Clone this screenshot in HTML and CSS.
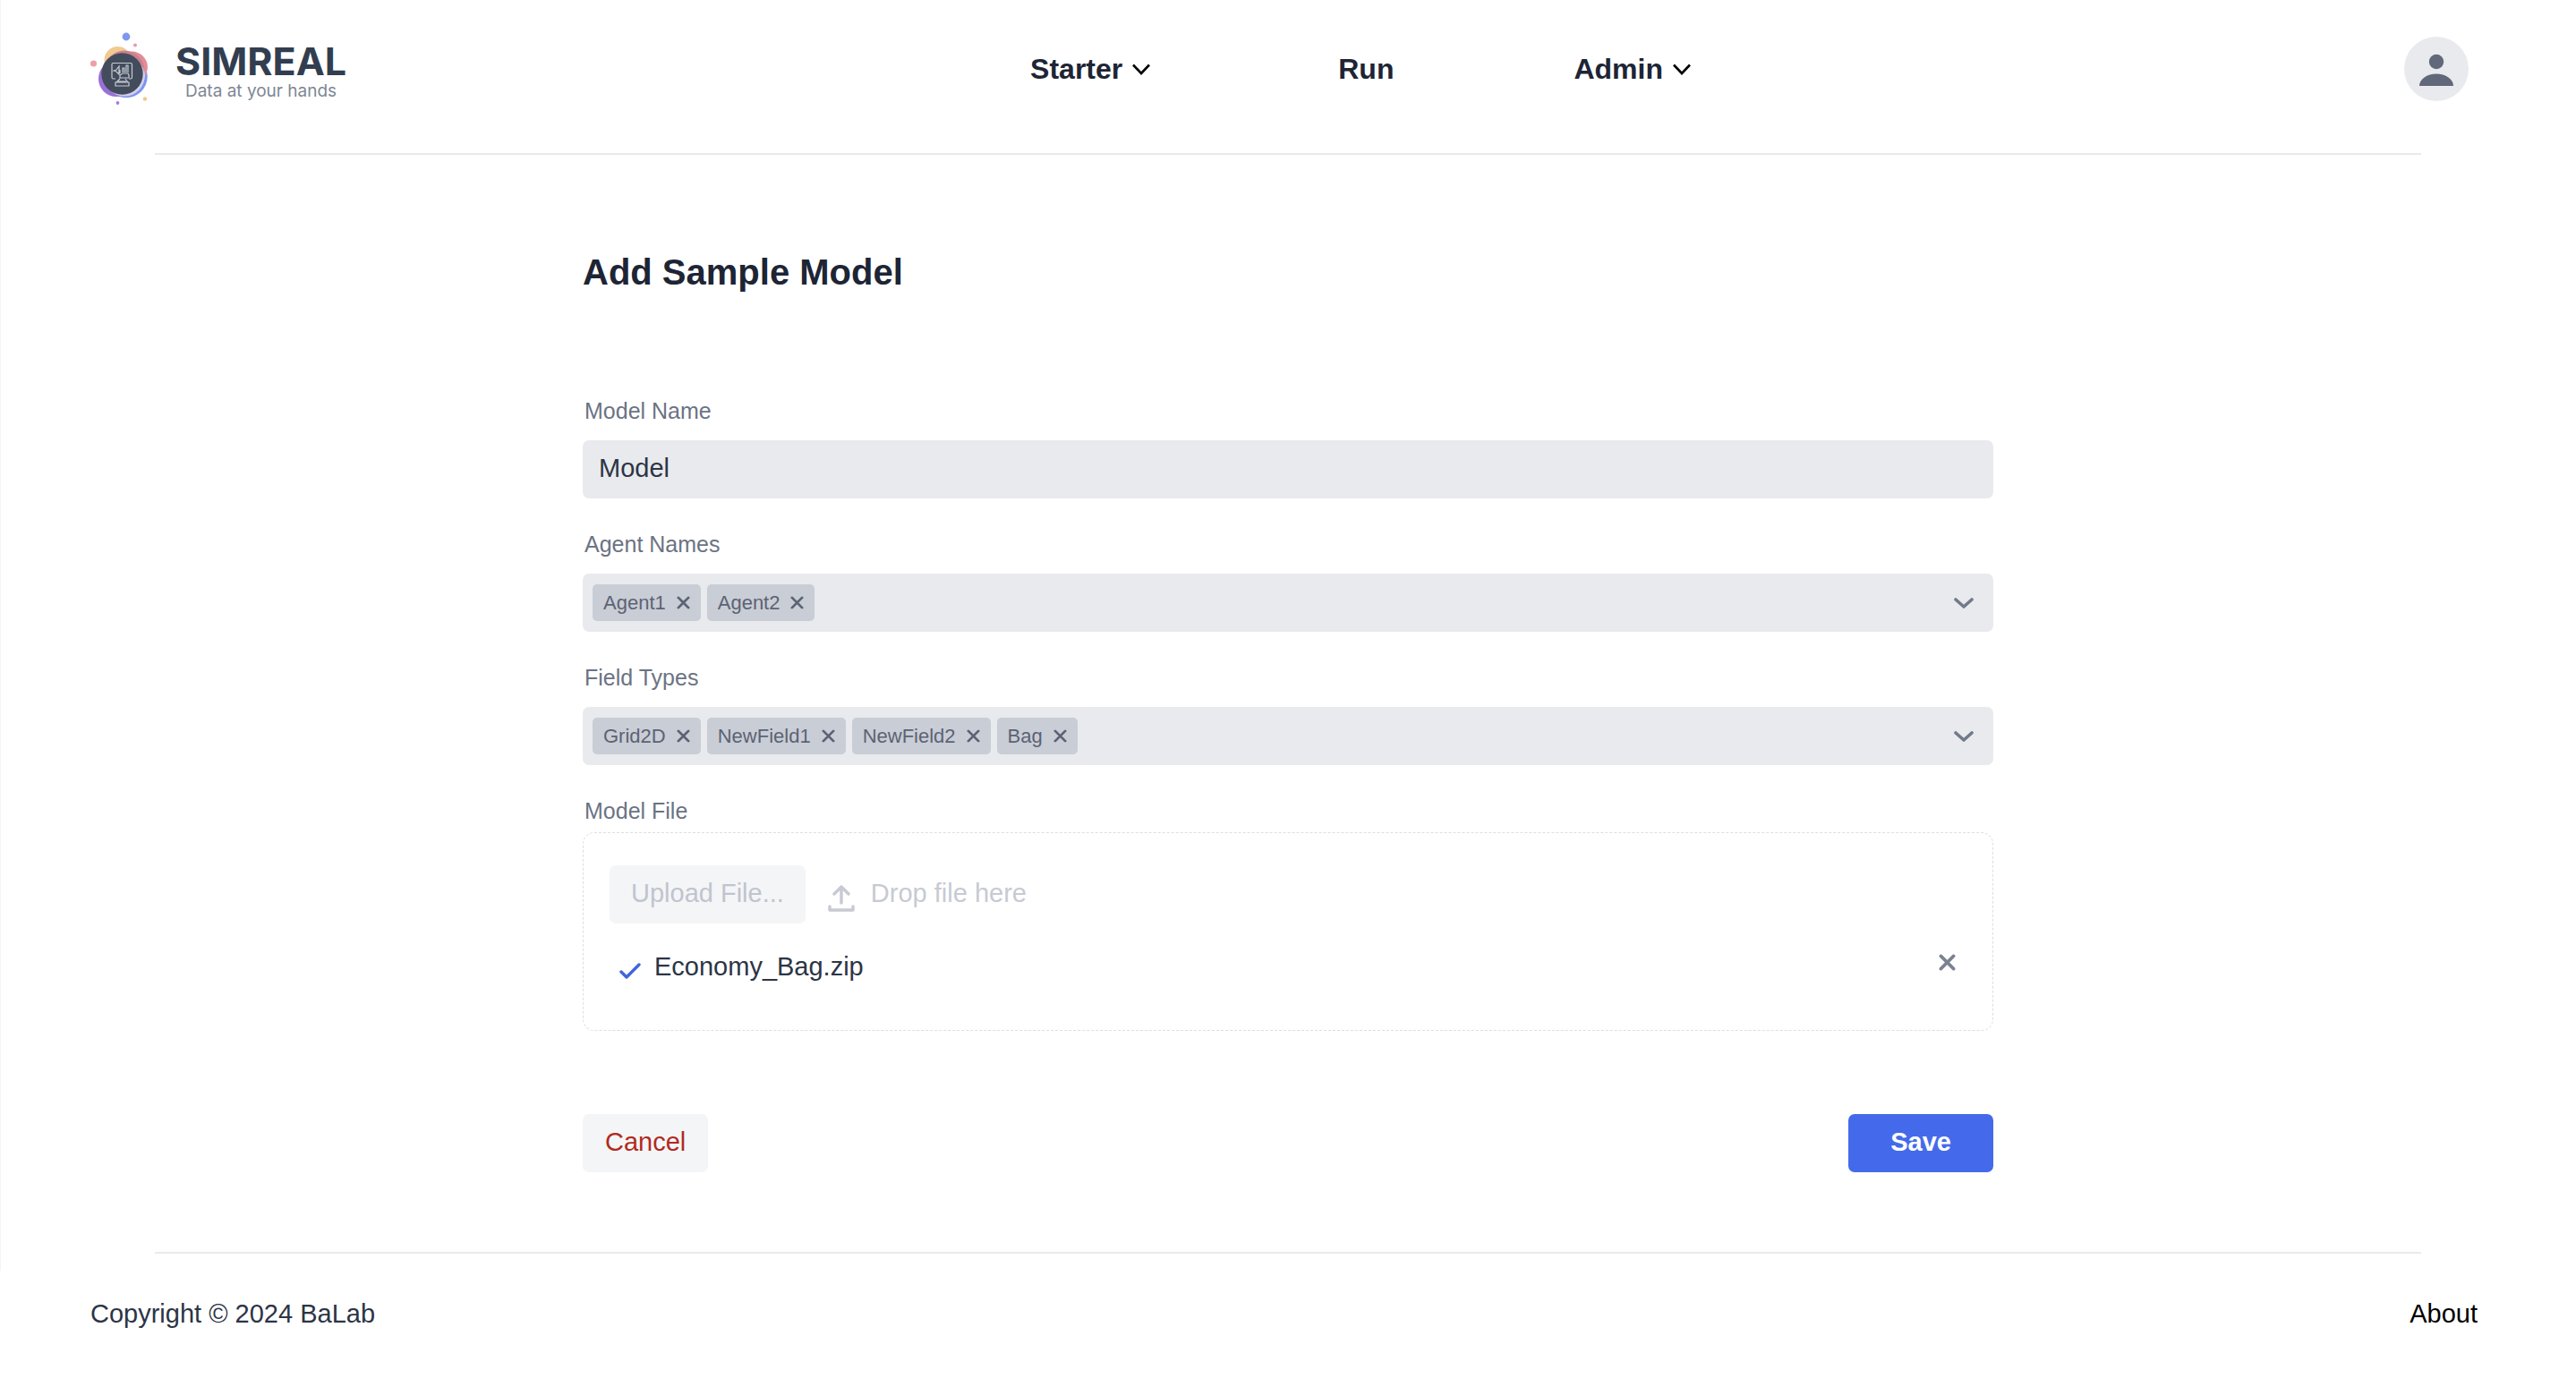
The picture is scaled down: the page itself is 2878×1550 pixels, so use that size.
FILE: index.html
```html
<!DOCTYPE html>
<html lang="en">
<head>
<meta charset="utf-8">
<meta name="viewport" content="width=device-width, initial-scale=1">
<title>Add Sample Model</title>
<link rel="stylesheet" href="styles.css">
</head>
<body>
<svg class="sprite" aria-hidden="true">
  <symbol id="cross" viewBox="0 0 16 16"><path d="M2 2l12 12M14 2L2 14" fill="none" stroke="currentColor" stroke-width="3" stroke-linecap="round"/></symbol>
  <symbol id="chevron" viewBox="0 0 22 12"><path d="M2 2l9 8 9-8" fill="none" stroke="currentColor" stroke-width="3.600" stroke-linecap="round" stroke-linejoin="round"/></symbol>
  <symbol id="caret" viewBox="0 0 20 13"><path d="M1 1.500l9 9.500 9-9.500" fill="none" stroke="currentColor" stroke-width="2.600"/></symbol>
</svg>
<div class="content">
  <header class="header">
    <a class="brand" href="#">
      <svg class="brand-mark" viewBox="0 0 64 82" aria-hidden="true">
        <circle cx="40" cy="5" r="4.400" fill="#7f97ee"/>
        <circle cx="50" cy="14.500" r="2" fill="#e89ba4"/>
        <circle cx="3.500" cy="35" r="3.600" fill="#eea0a8"/>
        <circle cx="61" cy="74.500" r="2.200" fill="#f0c890"/>
        <circle cx="30.500" cy="79" r="1.900" fill="#a77bdc"/>
        <circle cx="30.500" cy="31" r="15" fill="#f1c992"/>
        <circle cx="40" cy="49.500" r="23.700" fill="#7d95f0"/>
        <circle cx="46.500" cy="39" r="17.400" fill="#e28d97"/>
        <circle cx="29" cy="52" r="20" fill="#9a70d6"/>
        <circle cx="38" cy="47.500" r="23" fill="#d3cbe8"/>
        <circle cx="38" cy="43" r="22.500" fill="#c9808f"/>
        <circle cx="38" cy="49" r="22.600" fill="#d3cfec"/>
        <circle cx="35.500" cy="46.500" r="23.200" fill="#424c5c"/>
        <g fill="none" stroke="#c6cbd3" stroke-width="1.200">
          <path d="M28 52h-2.500a1.500 1.500 0 0 1-1.500-1.500V36a1.500 1.500 0 0 1 1.500-1.500H45a1.500 1.500 0 0 1 1.500 1.500v14.500A1.500 1.500 0 0 1 45 52h-2"/>
          <path d="M26 43l3-1 3-4v9l-3-3zM33 46v-4M36 45v-5h2v5M40 45v-8h2v8M33 51v-3l3-2h6l1 2v3zM31 55h9M33 52l-4 4M39 52l3 4M28 56h15v4H28z"/>
        </g>
      </svg>
      <span class="brand-text">
        <span class="brand-name">SIMREAL</span>
        <span class="brand-tagline">Data at your hands</span>
      </span>
    </a>
    <nav class="nav" aria-label="Main">
      <button type="button" class="nav-item nav-menu">Starter <svg class="caret"><use href="#caret"/></svg></button>
      <a class="nav-item" href="#">Run</a>
      <button type="button" class="nav-item nav-menu">Admin <svg class="caret"><use href="#caret"/></svg></button>
    </nav>
    <button type="button" class="avatar" aria-label="Account">
      <svg viewBox="0 0 72 72" aria-hidden="true"><circle cx="36" cy="28" r="8.200"/><path d="M17 55c0-7.500 8.500-13.500 19-13.500S55 47.500 55 55z"/></svg>
    </button>
  </header>
  <hr class="rule">
  <main class="main">
    <h1 class="title">Add Sample Model</h1>
    <form class="form">
      <div class="field">
        <label class="label" for="model-name">Model Name</label>
        <input class="box text-input" id="model-name" type="text" value="Model">
      </div>
      <div class="field" role="group" aria-labelledby="agents">
        <span class="label" id="agents">Agent Names</span>
        <div class="box combo">
          <span class="tag">Agent1<button type="button" class="tag-x" aria-label="Remove Agent1"><svg><use href="#cross"/></svg></button></span>
          <span class="tag">Agent2<button type="button" class="tag-x" aria-label="Remove Agent2"><svg><use href="#cross"/></svg></button></span>
          <button type="button" class="toggle" aria-label="Show agents"><svg><use href="#chevron"/></svg></button>
        </div>
      </div>
      <div class="field" role="group" aria-labelledby="fields">
        <span class="label" id="fields">Field Types</span>
        <div class="box combo">
          <span class="tag">Grid2D<button type="button" class="tag-x" aria-label="Remove Grid2D"><svg><use href="#cross"/></svg></button></span>
          <span class="tag">NewField1<button type="button" class="tag-x" aria-label="Remove NewField1"><svg><use href="#cross"/></svg></button></span>
          <span class="tag">NewField2<button type="button" class="tag-x" aria-label="Remove NewField2"><svg><use href="#cross"/></svg></button></span>
          <span class="tag">Bag<button type="button" class="tag-x" aria-label="Remove Bag"><svg><use href="#cross"/></svg></button></span>
          <button type="button" class="toggle" aria-label="Show field types"><svg><use href="#chevron"/></svg></button>
        </div>
      </div>
      <div class="field field-file" role="group" aria-labelledby="file">
        <span class="label" id="file">Model File</span>
        <div class="upload">
          <div class="upload-row">
            <button type="button" class="button button-upload" disabled>Upload File...</button>
            <svg class="upload-icon" viewBox="0 0 30 30" aria-hidden="true"><g fill="none" stroke="currentColor" stroke-linecap="round" stroke-linejoin="round"><path stroke-width="3.400" d="M15 20V2.500M7 10l8-8 8 8"/><path stroke-width="3.400" d="M2 24v4h26v-4"/></g></svg>
            <span class="drop-text">Drop file here</span>
          </div>
          <div class="file-row">
            <svg class="check" viewBox="0 0 24 18" aria-hidden="true"><path d="M2 10l6 6L22 2" fill="none" stroke="currentColor" stroke-width="3.400" stroke-linecap="round" stroke-linejoin="round"/></svg>
            <span class="file-name">Economy_Bag.zip</span>
            <button type="button" class="file-x" aria-label="Remove file"><svg><use href="#cross"/></svg></button>
          </div>
        </div>
      </div>
      <div class="actions">
        <button type="button" class="button button-cancel">Cancel</button>
        <button type="submit" class="button button-save">Save</button>
      </div>
    </form>
  </main>
  <hr class="rule">
</div>
<footer class="footer">
  <span>Copyright © 2024 BaLab</span>
  <a class="about" href="#">About</a>
</footer>
</body>
</html>
```
FILE: styles.css
```css
* { box-sizing: border-box; }

body {
  margin: 0;
  background: #fff;
  color: #2c3545;
  font: 29px/32px "Liberation Sans", Arial, sans-serif;
}

button, input { font: inherit; color: inherit; }
button { border: 0; background: none; padding: 0; }
a { color: inherit; text-decoration: none; }
svg { display: block; }
.sprite { position: absolute; width: 0; height: 0; }

.content { padding-bottom: 19px; box-shadow: inset 1px 0 #f3f4f6; }

.header {
  display: flex;
  justify-content: space-between;
  align-items: center;
  height: 171px;
  padding: 0 120px 17px 101px;
}

.brand { display: flex; align-items: center; gap: 31px; }
.brand-mark { width: 64px; height: 82px; }
.brand-text { display: flex; flex-direction: column; align-items: center; padding-top: 10px; }
.brand-name { font: 700 43px/40px Inter, sans-serif; color: #323e50; }
.brand-tagline { font: 19px/28px Inter, sans-serif; color: #7e8794; }

.nav { display: flex; gap: 201px; padding-right: 24px; }
.nav-item {
  display: flex;
  align-items: center;
  gap: 11px;
  font-size: 32px;
  font-weight: 700;
  color: #1d2535;
}
.nav-menu { padding-right: 9px; }
.caret { width: 20px; height: 13px; color: #000; }

.avatar {
  width: 72px;
  height: 72px;
  border-radius: 50%;
  background: #e9eaee;
  fill: #616879;
}

.rule { width: 88%; height: 2px; margin: 0 auto; border: 0; background: #e9eaee; }

.main { width: 1576px; max-width: 88%; margin: 0 auto; padding: 107px 0 89px; }
.title { margin: 0; font-size: 40px; line-height: 48px; color: #1d2535; }
.form { display: flex; flex-direction: column; gap: 32px; margin-top: 112px; }

.field { display: flex; flex-direction: column; gap: 14px; }
.field-file { gap: 5px; }
.label { padding-left: 2px; font-size: 25px; line-height: 38px; color: #6b7383; }

.box {
  width: 100%;
  height: 65px;
  border: 0;
  border-radius: 7px;
  background: #e9eaee;
}
.text-input { padding: 0 18px 3px; }
.combo { display: flex; align-items: center; gap: 7px; padding: 0 22px 0 11px; }

.tag {
  display: flex;
  align-items: center;
  gap: 12px;
  height: 41px;
  padding: 0 12px;
  border-radius: 5px;
  background: #c9cdd6;
  color: #5c6373;
  font-size: 22px;
}
.tag-x svg { width: 15px; height: 15px; }
.toggle { margin-left: auto; color: #717a8b; }
.toggle svg { width: 22px; height: 12px; }

.upload {
  display: flex;
  flex-direction: column;
  gap: 32px;
  height: 222px;
  padding: 36px 29px;
  border: 1px dashed #dcdee2;
  border-radius: 13px;
}
.upload-row { display: flex; align-items: center; color: #c7cad3; }
.upload-icon { width: 30px; height: 30px; margin: 8px 18px 0 25px; }
.drop-text { padding-bottom: 3px; }
.file-row { display: flex; align-items: center; padding: 0 12px 0 11px; }
.check { width: 24px; height: 18px; margin: 10px 15px 0 0; color: #4264dd; }
.file-x { margin-left: auto; padding-bottom: 9px; color: #7b8291; }
.file-x svg { width: 19px; height: 19px; }

.button { height: 65px; padding: 0 25px 3px; border-radius: 7px; background: #f4f5f7; }
.button-upload { padding: 0 24px 3px; color: #c0c4ce; }
.button-cancel { color: #b02a20; }
.button-save { padding: 0 47px 3px; background: #446aeb; color: #fff; font-weight: 700; }
.actions { display: flex; justify-content: space-between; margin-top: 61px; }

.footer { display: flex; justify-content: space-between; padding: 32px 110px 50px 101px; }
.about { color: #000; }
```
